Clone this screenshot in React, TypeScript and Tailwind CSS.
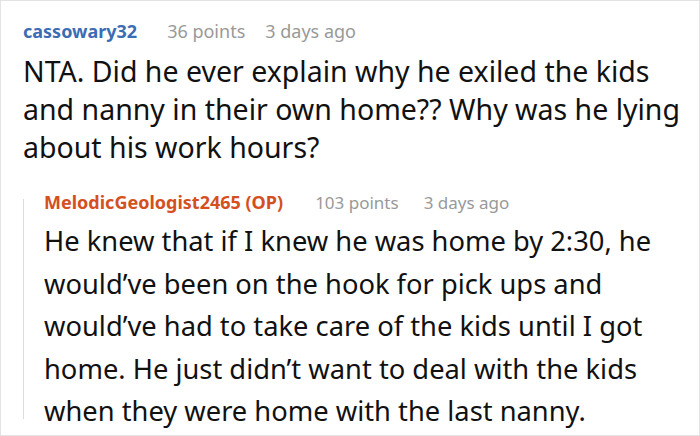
const Meta = ({ points, age, gap }: { points: string; age: string; gap: 'top' | 'reply' }) => (
  <>
    <span className={gap === 'top' ? 'ml-[30px] text-[#999]' : 'ml-[32px] text-[17px] text-[#999]'}>{points}</span>
    <span className={gap === 'top' ? 'ml-[20px] text-[#999]' : 'ml-[25px] text-[17px] text-[#999]'}>{age}</span>
  </>
)

export default function App() {
  return (
    <div
      className="h-[436px] w-[700px] overflow-hidden border border-[#e3e3e3] bg-white pl-[22px] text-[#111]"
      style={{ fontFamily: '"Noto Sans", "Open Sans", sans-serif' }}
    >
      {/* top-level comment */}
      <div className="pr-[13px] pt-[18px]">
        <div className="text-[18px] leading-[24px]">
          <span className="font-bold text-[#3b6db5]">cassowary32</span>
          <Meta points="36 points" age="3 days ago" gap="top" />
        </div>
        <p className="mt-[9px] text-[28.5px] leading-[38px]">
          NTA. Did he ever explain why he exiled the kids and nanny in their own home?? Why was he lying about his work hours?
        </p>
      </div>

      {/* reply */}
      <div className="relative mt-[24px] pl-[21px] pr-[8px] before:absolute before:bottom-[14px] before:left-0 before:top-[9px] before:w-px before:bg-[#dcdcdc]">
        <div className="text-[18px] leading-[24px]">
          <span className="font-bold text-[#d4501f]">MelodicGeologist2465 (OP)</span>
          <Meta points="103 points" age="3 days ago" gap="reply" />
        </div>
        <p className="mt-[5px] text-[27.3px] leading-[42.5px]">
          He knew that if I knew he was home by 2:30, he would’ve been on the hook for pick ups and would’ve had to take care of the kids until I got home. He just didn’t want to deal with the kids when they were home with the last nanny.
        </p>
      </div>
    </div>
  )
}
